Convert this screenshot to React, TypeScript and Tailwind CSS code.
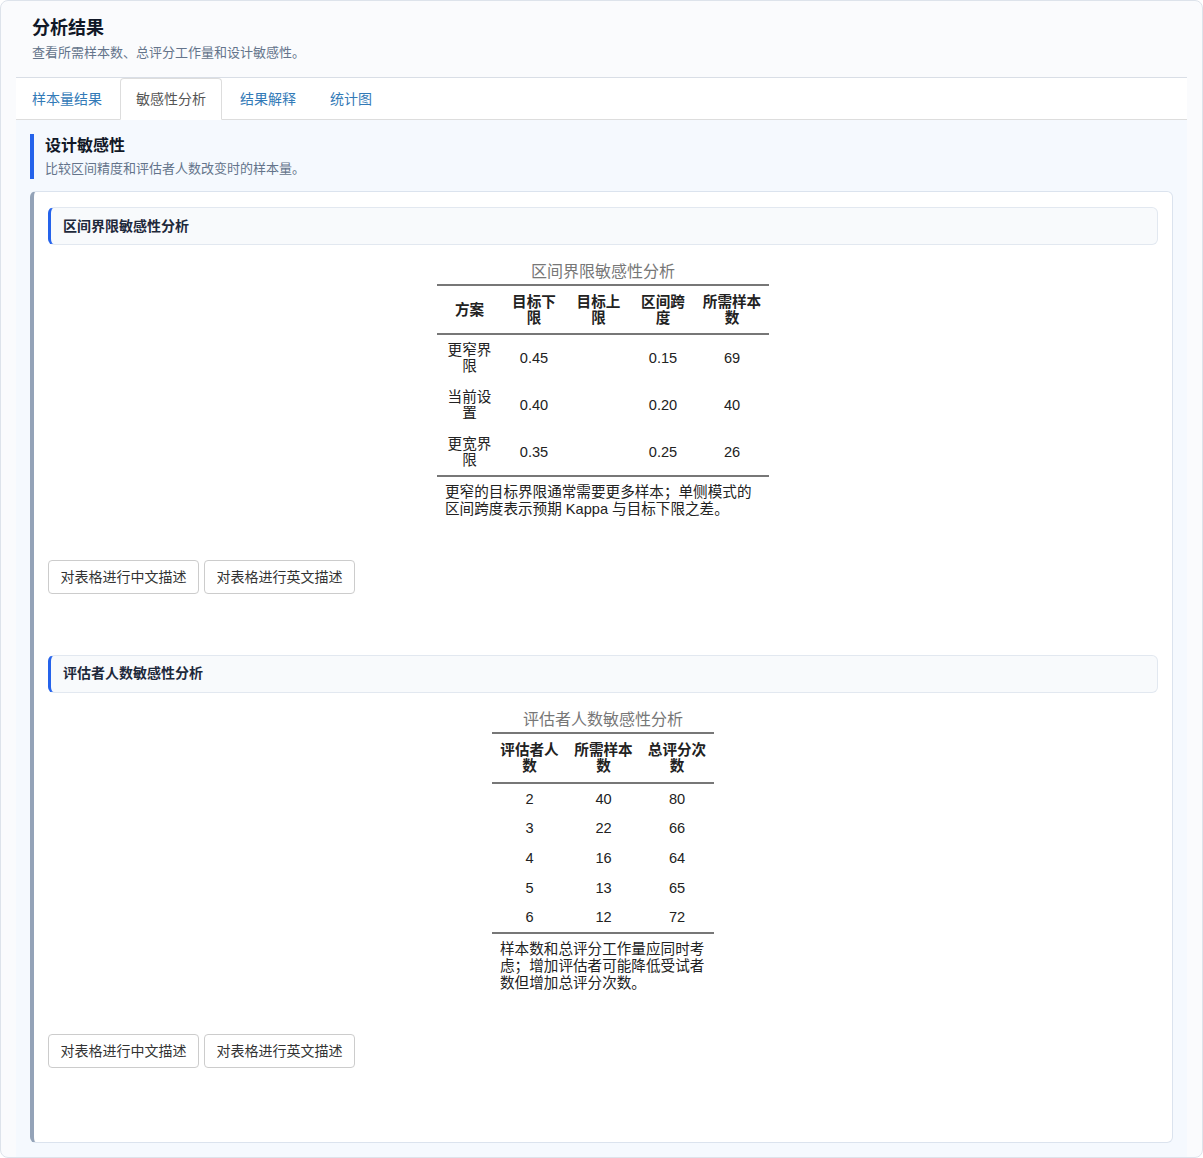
import React from "react";

type Row = string[];

function DataTable({
  caption,
  headers,
  rows,
  widths,
  note,
  thPad,
  tdPad,
}: {
  caption: string;
  headers: string[];
  rows: Row[];
  widths: number[];
  note: string;
  thPad: string;
  tdPad: string;
}) {
  const total = widths.reduce((a, b) => a + b, 0);
  return (
    <div className="mx-auto mt-4" style={{ width: total }}>
      <div className="text-center text-[16px] leading-[22px] text-[#777] pb-px">{caption}</div>
      <table className="w-full table-fixed border-collapse text-[14.6px] leading-4 text-[#222]">
        <colgroup>
          {widths.map((w, i) => (
            <col key={i} style={{ width: w }} />
          ))}
        </colgroup>
        <thead>
          <tr className="border-t-2 border-b-2 border-[#777]">
            {headers.map((h, i) => (
              <th
                key={i}
                className="px-[7px] text-center align-middle font-bold"
                style={{ paddingTop: thPad, paddingBottom: thPad }}
              >
                {h}
              </th>
            ))}
          </tr>
        </thead>
        <tbody className="border-b-2 border-[#777]">
          {rows.map((r, i) => (
            <tr key={i}>
              {r.map((c, j) => (
                <td
                  key={j}
                  className="px-[7px] text-center align-middle"
                  style={{ paddingTop: tdPad, paddingBottom: tdPad }}
                >
                  {c}
                </td>
              ))}
            </tr>
          ))}
        </tbody>
      </table>
      <div className="px-[8px] pt-[7px] text-[14.6px] leading-[17px] text-[#222]">{note}</div>
    </div>
  );
}

function Section({
  title,
  children,
}: {
  title: string;
  children: React.ReactNode;
}) {
  return (
    <div className="mb-[61px]">
      <div className="h-[38px] flex items-center rounded-md border border-[#e2e8f0] border-l-[3px] border-l-[#2563eb] bg-[#f8fafc] pl-3 text-[14px] font-bold text-[#1e293b]">
        {title}
      </div>
      {children}
      <div className="mt-[42px] flex gap-[5px]">
        <button className="h-[34px] rounded-[4px] border border-[#ccc] bg-white px-[11.5px] text-[14px] leading-5 text-[#333]">
          对表格进行中文描述
        </button>
        <button className="h-[34px] rounded-[4px] border border-[#ccc] bg-white px-[11.5px] text-[14px] leading-5 text-[#333]">
          对表格进行英文描述
        </button>
      </div>
    </div>
  );
}

export default function App() {
  return (
    <div className="w-[1203px] h-[1158px] overflow-hidden rounded-lg border border-[#dde3eb] bg-[#fafbfd] px-[15px] font-['Liberation_Sans','Noto_Sans_CJK_SC',sans-serif]">
      <div className="flex h-full flex-col">
        {/* header */}
        <div className="border-b border-[#d9dee6] px-4 pt-[14px] pb-[14px]">
          <div className="text-[18px] font-bold leading-[26px] text-[#111827]">分析结果</div>
          <div className="mt-[2px] text-[13px] leading-5 text-[#64748b]">
            查看所需样本数、总评分工作量和设计敏感性。
          </div>
        </div>
        {/* tabs */}
        <div className="flex border-b border-[#dddddd] bg-white">
          <div className="-mb-px mr-[2px] rounded-t border border-transparent px-[15px] py-[10px] text-[14px] leading-5 text-[#337ab7]">
            样本量结果
          </div>
          <div className="-mb-px mr-[2px] rounded-t border border-[#dddddd] border-b-white bg-white px-[15px] py-[10px] text-[14px] leading-5 text-[#555]">
            敏感性分析
          </div>
          <div className="-mb-px mr-[2px] rounded-t border border-transparent px-[15px] py-[10px] text-[14px] leading-5 text-[#337ab7]">
            结果解释
          </div>
          <div className="-mb-px mr-[2px] rounded-t border border-transparent px-[15px] py-[10px] text-[14px] leading-5 text-[#337ab7]">
            统计图
          </div>
        </div>
        {/* content */}
        <div className="flex-1 bg-[#f5f9fe] p-[14px]">
          <div className="border-l-4 border-[#2563eb] pl-[11px] pt-px">
            <div className="text-[16px] font-bold leading-[22px] text-[#111827]">设计敏感性</div>
            <div className="mt-[2px] text-[13px] leading-5 text-[#64748b]">
              比较区间精度和评估者人数改变时的样本量。
            </div>
          </div>
          <div className="mt-3 rounded-md border border-[#dbe3ee] border-l-4 border-l-[#94a3b8] bg-white px-[14px] pt-[15px] pb-[13px]">
            <Section title="区间界限敏感性分析">
              <DataTable
                caption="区间界限敏感性分析"
                headers={["方案", "目标下限", "目标上限", "区间跨度", "所需样本数"]}
                widths={[65, 64, 65, 64, 74]}
                thPad="7.5px"
                tdPad="7.33px"
                rows={[
                  ["更窄界限", "0.45", "", "0.15", "69"],
                  ["当前设置", "0.40", "", "0.20", "40"],
                  ["更宽界限", "0.35", "", "0.25", "26"],
                ]}
                note="更窄的目标界限通常需要更多样本；单侧模式的区间跨度表示预期 Kappa 与目标下限之差。"
              />
            </Section>
            <Section title="评估者人数敏感性分析">
              <DataTable
                caption="评估者人数敏感性分析"
                headers={["评估者人数", "所需样本数", "总评分次数"]}
                widths={[75, 73, 74]}
                thPad="8px"
                tdPad="6.8px"
                rows={[
                  ["2", "40", "80"],
                  ["3", "22", "66"],
                  ["4", "16", "64"],
                  ["5", "13", "65"],
                  ["6", "12", "72"],
                ]}
                note="样本数和总评分工作量应同时考虑；增加评估者可能降低受试者数但增加总评分次数。"
              />
            </Section>
          </div>
        </div>
      </div>
    </div>
  );
}
